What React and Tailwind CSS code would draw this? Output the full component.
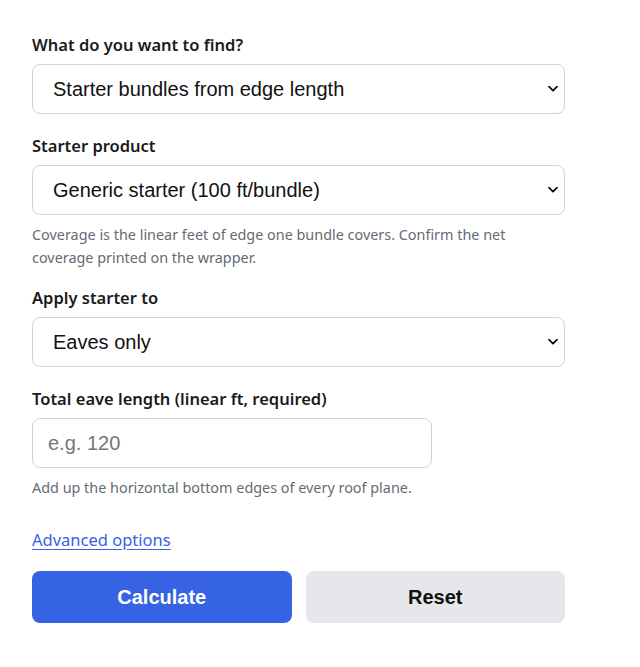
import { useState } from 'react'

function Chevron() {
  return (
    <svg className="pointer-events-none absolute right-[7px] top-1/2 -translate-y-1/2" width="10" height="7" viewBox="0 0 10 7" fill="none">
      <path d="M1 1.2 L5 5.2 L9 1.2" stroke="#111" strokeWidth="1.8" strokeLinecap="round" strokeLinejoin="round" />
    </svg>
  )
}

function Select({ value, onChange, options }) {
  return (
    <div className="relative">
      <select
        value={value}
        onChange={function(e) { onChange(e.target.value) }}
        className="appearance-none w-full h-[50px] rounded-lg border border-[#ced4da] bg-white pl-[20px] pr-8 text-[20px] text-[#111] outline-none font-['Liberation_Sans',Arial,sans-serif]"
      >
        {options.map(function(o) { return <option key={o} value={o}>{o}</option> })}
      </select>
      <Chevron />
    </div>
  )
}

export default function App() {
  const [mode, setMode] = useState('Starter bundles from edge length')
  const [product, setProduct] = useState('Generic starter (100 ft/bundle)')
  const [apply, setApply] = useState('Eaves only')
  const [length, setLength] = useState('')

  var label = "block text-[16.5px] font-semibold text-[#1a1a1a] leading-[24px] mb-[7px]"
  var help = "text-[14.4px] leading-[23px] text-[#666b73] mt-[8px]"

  return (
    <div className="min-h-screen bg-white font-['Noto_Sans',sans-serif]">
      <div className="w-[533px] ml-[32px] pt-[33px]">
        <label className={label}>What do you want to find?</label>
        <Select value={mode} onChange={setMode} options={['Starter bundles from edge length', 'Edge length from bundles']} />

        <label className={label + ' mt-[20px]'}>Starter product</label>
        <Select value={product} onChange={setProduct} options={['Generic starter (100 ft/bundle)', 'Custom coverage']} />
        <p className={help}>Coverage is the linear feet of edge one bundle covers. Confirm the net coverage printed on the wrapper.</p>

        <label className={label + ' mt-[17px]'}>Apply starter to</label>
        <Select value={apply} onChange={setApply} options={['Eaves only', 'Eaves and rakes']} />

        <label className={label + ' mt-[20px]'}>Total eave length (linear ft, required)</label>
        <input
          value={length}
          onChange={function(e) { setLength(e.target.value) }}
          placeholder="e.g. 120"
          className="w-[400px] h-[50px] rounded-lg border border-[#ced4da] bg-white px-[15px] text-[20px] text-[#111] placeholder:text-[#767676] outline-none font-['Liberation_Sans',Arial,sans-serif]"
        />
        <p className={help}>Add up the horizontal bottom edges of every roof plane.</p>

        <a href="#" className="inline-block mt-[29px] text-[16.5px] leading-[24px] text-[#3563e3] underline underline-offset-[3px]">Advanced options</a>

        <div className="grid grid-cols-2 gap-[14px] mt-[19px]">
          <button className="h-[52px] rounded-lg bg-[#3563e3] text-white text-[20px] font-bold font-['Liberation_Sans',Arial,sans-serif]">Calculate</button>
          <button
            onClick={function() { setLength('') }}
            className="h-[52px] rounded-lg bg-[#e5e7eb] text-[#111] text-[20px] font-bold font-['Liberation_Sans',Arial,sans-serif]">Reset</button>
        </div>
      </div>
    </div>
  )
}
